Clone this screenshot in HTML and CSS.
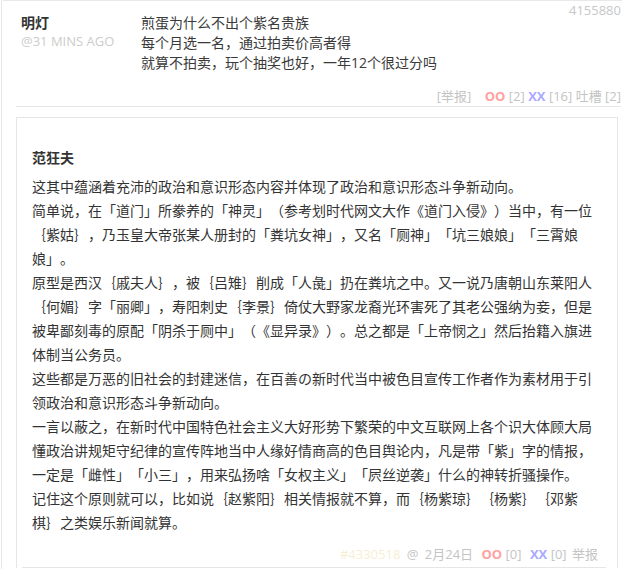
FILE: index.html
```html
<!DOCTYPE html>
<html lang="zh-CN">
<head>
<meta charset="utf-8">
<title>comment</title>
<link rel="stylesheet" href="styles.css">
</head>
<body>
<div class="page">
  <div class="topline"></div>
  <div class="item">
    <span class="cid">4155880</span>
    <div class="row">
      <div class="author">
        <div class="name">明灯</div>
        <div class="time">@31 MINS AGO</div>
      </div>
      <div class="text">
        煎蛋为什么不出个紫名贵族<br>
        每个月选一名，通过拍卖价高者得<br>
        就算不拍卖，玩个抽奖也好，一年12个很过分吗
      </div>
    </div>
    <div class="actions">
      <span class="report">[举报]</span>
      <span class="oo">OO</span> <span>[2]</span>
      <span class="xx">XX</span> <span>[16]</span>
      <span>吐槽 [2]</span>
    </div>
  </div>
  <div class="quote">
    <div class="qname">范狂夫</div>
    <div class="qbody">这其中蕴涵着充沛的政治和意识形态内容并体现了政治和意识形态斗争新动向。<br>简单说，在「道门」所豢养的「神灵」（参考划时代网文大作《道门入侵》）当中，有一位｛紫姑｝，乃玉皇大帝张某人册封的「粪坑女神」，又名「厕神」「坑三娘娘」「三霄娘娘」。<br>原型是西汉｛戚夫人｝，被｛吕雉｝削成「人彘」扔在粪坑之中。又一说乃唐朝山东莱阳人｛何媚｝字「丽卿」，寿阳刺史｛李景｝倚仗大野家龙裔光环害死了其老公强纳为妾，但是被卑鄙刻毒的原配「阴杀于厕中」（《显异录》）。总之都是「上帝悯之」然后抬籍入旗进体制当公务员。<br>这些都是万恶的旧社会的封建迷信，在百善の新时代当中被色目宣传工作者作为素材用于引领政治和意识形态斗争新动向。<br>一言以蔽之，在新时代中国特色社会主义大好形势下繁荣的中文互联网上各个识大体顾大局懂政治讲规矩守纪律的宣传阵地当中人缘好情商高的色目舆论内，凡是带「紫」字的情报，一定是「雌性」「小三」，用来弘扬啥「女权主义」「屄丝逆袭」什么的神转折骚操作。<br>记住这个原则就可以，比如说｛赵紫阳｝相关情报就不算，而｛杨紫琼｝｛杨紫｝｛邓紫棋｝之类娱乐新闻就算。</div>
    <div class="qfoot">
      <span class="qid">#4330518</span>
      <span class="at">@</span>
      <span class="date">2月24日</span>
      <span class="oo">OO</span> <span class="cnt">[0]</span>
      <span class="xx">XX</span> <span>[0]</span>
      <span class="rep">举报</span>
    </div>
    <div class="qline"></div>
  </div>
</div>
</body>
</html>
```
FILE: styles.css
```css
html, body {
  margin: 0;
  padding: 0;
  background: #fff;
}
body {
  font-family: "Open Sans", "Noto Sans CJK SC", sans-serif;
  color: #333;
  font-size: 14px;
  text-spacing-trim: space-all;
  font-feature-settings: "halt" 0, "chws" 0;
}
.page {
  margin-left: 1px;
  border-left: 1px solid #e6e6e6;
  min-height: 569px;
  box-sizing: border-box;
}
.topline {
  height: 1px;
  width: 619px;
  margin-left: 1px;
  background: #e8e8e8;
}
.item {
  position: relative;
  margin-left: 14px;
  width: 605px;
  padding: 12px 0 0 0;
  border-bottom: 1px solid #e6e6e6;
}
.cid {
  position: absolute;
  top: 0;
  right: 0;
  font-size: 13px;
  line-height: 18px;
  color: #c8c8c8;
}
.row {
  display: flex;
}
.author {
  width: 120px;
  padding-left: 5px;
  flex: none;
}
.name {
  font-weight: bold;
  line-height: 20px;
  font-size: 14px;
  color: #333;
}
.time {
  font-size: 13px;
  line-height: 16px;
  color: #cccccc;
}
.text {
  line-height: 20px;
  color: #3a3a3a;
}
.actions {
  margin-top: 13px;
  line-height: 20px;
  height: 20px;
  font-size: 13px;
  color: #c4c4c4;
  text-align: right;
  white-space: nowrap;
}
.report {
  margin-right: 10px;
}
.oo {
  color: #ffa1a1;
  font-weight: bold;
}
.xx {
  color: #a9a9ff;
  font-weight: bold;
}
.quote {
  margin: 10px 0 0 14px;
  width: 566px;
  padding: 28px 19px 0 15px;
  border: 1px solid #e6e6e6;
  border-bottom: none;
}
.qname {
  font-weight: bold;
  line-height: 24px;
  margin-bottom: 5px;
}
.qbody {
  line-height: 24px;
  color: #333;
}
.qfoot {
  margin-top: 9px;
  line-height: 20px;
  font-size: 13px;
  color: #c4c4c4;
  text-align: right;
  white-space: nowrap;
}
.qid {
  color: #f5efd2;
  margin-right: 3px;
}
.at {
  margin-right: 3px;
}
.date {
  margin-right: 5px;
}
.cnt {
  margin-right: 5px;
}
.rep {
  margin-left: 2px;
}
.qline {
  margin: 3px -8px 0 -10px;
  height: 1px;
  background: #e6e6e6;
}
```
